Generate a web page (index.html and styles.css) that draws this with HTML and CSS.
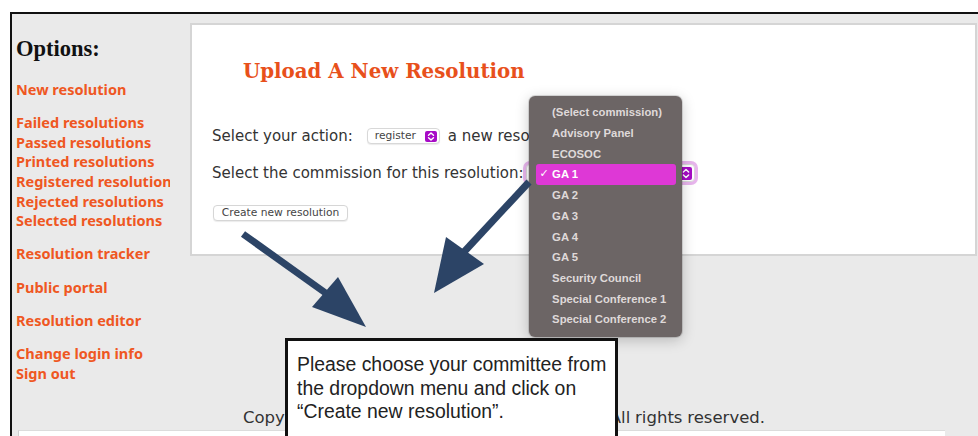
FILE: index.html
```html
<!DOCTYPE html>
<html lang="en">
<head>
<meta charset="utf-8">
<title>Upload A New Resolution</title>
<link rel="stylesheet" href="styles.css">
</head>
<body>
<div class="frame">
  <div class="layout">
    <aside class="sidebar">
      <h2 class="sidebar-title">Options:</h2>
      <ul class="nav-group">
        <li><a href="#">New resolution</a></li>
      </ul>
      <ul class="nav-group">
        <li><a href="#">Failed resolutions</a></li>
        <li><a href="#">Passed resolutions</a></li>
        <li><a href="#">Printed resolutions</a></li>
        <li><a href="#">Registered resolutions</a></li>
        <li><a href="#">Rejected resolutions</a></li>
        <li><a href="#">Selected resolutions</a></li>
      </ul>
      <ul class="nav-group">
        <li><a href="#">Resolution tracker</a></li>
      </ul>
      <ul class="nav-group">
        <li><a href="#">Public portal</a></li>
      </ul>
      <ul class="nav-group">
        <li><a href="#">Resolution editor</a></li>
      </ul>
      <ul class="nav-group">
        <li><a href="#">Change login info</a></li>
        <li><a href="#">Sign out</a></li>
      </ul>
    </aside>

    <main class="panel">
      <h1 class="panel-title">Upload A New Resolution</h1>
      <div class="form-row">
        <span>Select your action:</span>
        <span class="select select-action">
          <span class="select-value">register</span>
          <span class="select-arrow"><svg viewBox="0 0 12 11" width="12" height="11"><path d="M3.5 4.2 6 1.9 8.5 4.2M3.5 6.8 6 9.1 8.5 6.8" fill="none" stroke="#fff" stroke-width="1.4" stroke-linecap="round" stroke-linejoin="round"/></svg></span>
        </span>
        <span>a new resolution</span>
      </div>
      <div class="form-row">
        <span>Select the commission for this resolution:</span>
        <span class="select select-commission is-open">
          <span class="select-value">GA 1</span>
          <span class="select-arrow select-arrow-lg"><svg viewBox="0 0 12 13" width="12" height="13"><path d="M3.4 5 6 2.5 8.6 5M3.4 8 6 10.5 8.6 8" fill="none" stroke="#fff" stroke-width="1.5" stroke-linecap="round" stroke-linejoin="round"/></svg></span>
        </span>
      </div>
      <button class="btn" type="button">Create new resolution</button>
    </main>
  </div>

  <footer class="footer">Copyright © 2018-19 Model United Nations. All rights reserved.</footer>
  <div class="footer-box"></div>
</div>

<!-- open commission list -->
<ul class="menu">
  <li class="menu-item">(Select commission)</li>
  <li class="menu-item">Advisory Panel</li>
  <li class="menu-item">ECOSOC</li>
  <li class="menu-item is-selected"><span class="menu-check">✓</span>GA 1</li>
  <li class="menu-item">GA 2</li>
  <li class="menu-item">GA 3</li>
  <li class="menu-item">GA 4</li>
  <li class="menu-item">GA 5</li>
  <li class="menu-item">Security Council</li>
  <li class="menu-item">Special Conference 1</li>
  <li class="menu-item">Special Conference 2</li>
</ul>

<!-- guide arrows -->
<svg class="annotations" width="978" height="436" viewBox="0 0 978 436">
  <g fill="#2c4466" stroke="#2c4466">
    <line x1="243" y1="234" x2="327" y2="294" stroke-width="7"/>
    <polygon points="366,327 312,307 338,277" stroke="none"/>
    <line x1="529" y1="182" x2="463" y2="253" stroke-width="7"/>
    <polygon points="434,293 446,237 484,264" stroke="none"/>
  </g>
</svg>

<div class="callout">
  <p>Please choose your committee from the dropdown menu and click on “Create new resolution”.</p>
</div>
</body>
</html>
```

FILE: styles.css
```css
html, body {
  margin: 0;
  padding: 0;
  height: 100%;
}

body {
  background: #ffffff;
  overflow: hidden;
  position: relative;
  font-family: "DejaVu Sans", Verdana, sans-serif;
  color: #333;
}

/* page frame */
.frame {
  box-sizing: border-box;
  height: 424px;
  margin: 12px 0 0 10px;
  border-top: 2px solid #111;
  border-left: 2px solid #111;
  background: #eaeaea;
  overflow: hidden;
}

.layout {
  display: flex;
  align-items: flex-start;
}

/* left navigation */
.sidebar {
  width: 154px;
  padding-left: 4px;
  margin-right: 20px;
  overflow: hidden;
  white-space: nowrap;
  flex: none;
}

.sidebar-title {
  margin: 22.5px 0 0;
  font-family: "Liberation Serif", "Times New Roman", serif;
  font-weight: bold;
  font-size: 22.5px;
  line-height: 24px;
  color: #111;
}

.nav-group {
  list-style: none;
  margin: 13.7px 0 0;
  padding: 0;
}

.sidebar-title + .nav-group {
  margin-top: 19.4px;
}

.nav-group a {
  display: block;
  font-family: "Noto Sans", "Open Sans", sans-serif;
  font-weight: 700;
  font-size: 14.5px;
  line-height: 19.6px;
  color: #ef5722;
  text-decoration: none;
}

/* content card */
.panel {
  box-sizing: border-box;
  width: 787px;
  height: 233px;
  margin-top: 9px;
  padding: 0 20px;
  background: #fff;
  border: 2px solid #d5d5d5;
  flex: none;
}

.panel-title {
  margin: 34.2px 0 0 31px;
  font-family: "DejaVu Serif", Georgia, serif;
  font-weight: bold;
  font-size: 19.8px;
  line-height: 24px;
  color: #e8501b;
}

.form-row {
  display: flex;
  align-items: center;
  height: 20px;
  margin-top: 16.6px;
  font-size: 15px;
  line-height: 20px;
  color: #333;
  white-space: nowrap;
}

.panel-title + .form-row {
  margin-top: 43.3px;
}

.select {
  box-sizing: border-box;
  display: inline-flex;
  align-items: center;
  justify-content: space-between;
  height: 16px;
  padding: 0 2px 0 7px;
  background: #fff;
  border: 1px solid #d8d8d8;
  border-radius: 4px;
  box-shadow: 0 1px 1px rgba(0, 0, 0, 0.08);
  font-size: 10.7px;
  color: #444;
}

.select-action {
  width: 73px;
  margin: 0 8px 0 14px;
}

.select-commission {
  width: 169px;
  height: 18px;
  margin-left: 2px;
}

.select-commission.is-open {
  box-shadow: 0 0 0 3px rgba(205, 90, 215, 0.45);
}

.select-arrow {
  display: flex;
  width: 12px;
  height: 11px;
  border-radius: 2px;
  background: #a70bc6;
}

.select-arrow-lg {
  width: 12px;
  height: 13px;
}

.btn {
  display: block;
  box-sizing: border-box;
  width: 135px;
  height: 16px;
  margin: 21.9px 0 0 1px;
  padding: 0;
  background: #fff;
  border: 1px solid #d6d6d6;
  border-radius: 4px;
  box-shadow: 0 1px 1px rgba(0, 0, 0, 0.08);
  font-family: "DejaVu Sans", Verdana, sans-serif;
  font-size: 10.7px;
  line-height: 14px;
  color: #444;
}

/* footer */
.footer {
  margin-top: 25px;
  padding-left: 231px;
  font-size: 16.5px;
  line-height: 20px;
  word-spacing: -0.4px;
  color: #333;
  white-space: nowrap;
}

.footer-box {
  height: 20px;
  margin: 2px 0 0 6px;
  width: 926px;
  background: #fff;
  border-left: 1px solid #cfcfcf;
  border-top: 1px solid #dcdcdc;
}

/* open dropdown list */
.menu {
  position: absolute;
  left: 529px;
  top: 96px;
  box-sizing: border-box;
  width: 153px;
  height: 241px;
  margin: 0;
  padding: 6.4px 6.5px;
  list-style: none;
  background: #6c6565;
  border-radius: 6px;
  box-shadow: 0 3px 14px rgba(0, 0, 0, 0.22), 0 0 0 1px rgba(0, 0, 0, 0.12);
}

.menu-item {
  position: relative;
  height: 20.7px;
  padding-left: 16.6px;
  font-family: "Liberation Sans", Arial, sans-serif;
  font-weight: bold;
  font-size: 11.3px;
  line-height: 20.7px;
  color: #dfd9d9;
  white-space: nowrap;
  border-radius: 3px;
}

.menu-item.is-selected {
  background: #de38d6;
  color: #fff;
}

.menu-check {
  position: absolute;
  left: 4px;
  top: 0;
  font-family: "DejaVu Sans", sans-serif;
  font-weight: normal;
  font-size: 11px;
}

/* guide arrows */
.annotations {
  position: absolute;
  left: 0;
  top: 0;
  pointer-events: none;
}

/* instruction note */
.callout {
  position: absolute;
  left: 285px;
  top: 338px;
  box-sizing: border-box;
  width: 333px;
  height: 130px;
  padding: 12px 8px 0 9px;
  background: #fff;
  border: 3px solid #111;
}

.callout p {
  margin: 0;
  font-family: "Liberation Sans", Arial, sans-serif;
  font-size: 19.4px;
  line-height: 23.5px;
  color: #222;
}
```
